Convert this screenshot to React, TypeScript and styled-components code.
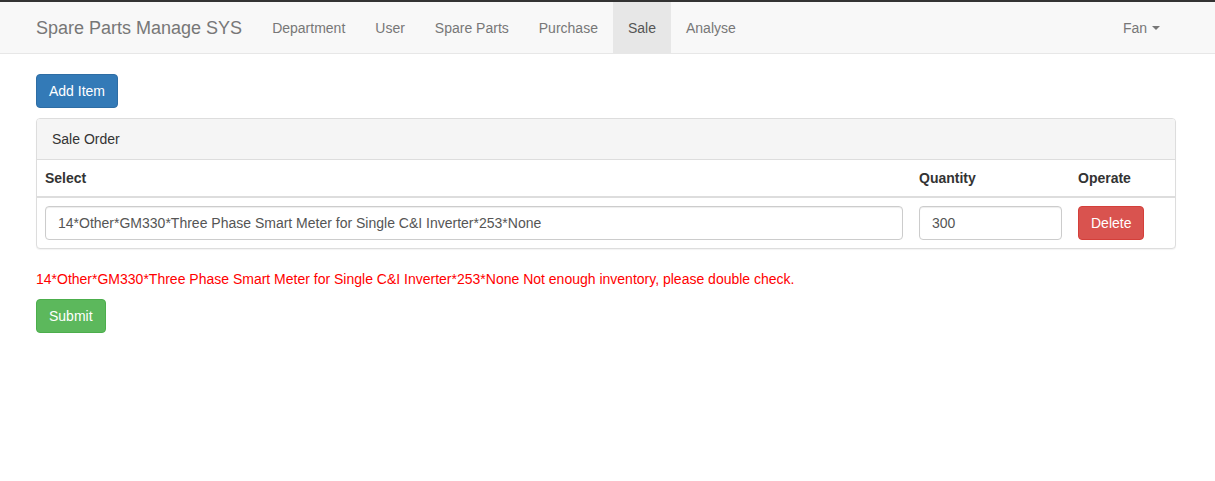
import React from "react";
import styled, { createGlobalStyle } from "styled-components";

const Global = createGlobalStyle`
  html, body { margin: 0; padding: 0; background: #fff; }
  body {
    font-family: "Liberation Sans", Arial, Helvetica, sans-serif;
    font-size: 14px;
    line-height: 1.42857143;
    color: #333;
  }
  * { box-sizing: border-box; }
`;

const TopLine = styled.div`
  height: 2px;
  background: #333;
`;

const Navbar = styled.nav`
  background: #f8f8f8;
  border-bottom: 1px solid #e7e7e7;
  margin-bottom: 20px;
`;

const Container = styled.div`
  width: 1170px;
  margin-left: 21px;
  padding: 0 15px;
`;

const NavInner = styled.div`
  display: flex;
  align-items: stretch;
  height: 51px;
`;

const Brand = styled.a`
  font-size: 18px;
  line-height: 20px;
  padding: 16px 15px 15px 0;
  color: #777;
  text-decoration: none;
`;

const NavList = styled.ul`
  display: flex;
  list-style: none;
  margin: 0;
  padding: 0;
`;

const RightList = styled(NavList)`
  margin-left: auto;
  margin-right: 1px;
`;

const NavLink = styled.a<{ $active?: boolean }>`
  display: flex;
  align-items: center;
  height: 51px;
  padding: 1px 15px 0;
  font-size: 14px;
  color: ${(p) => (p.$active ? "#555" : "#777")};
  background: ${(p) => (p.$active ? "#e7e7e7" : "transparent")};
  text-decoration: none;
`;

const Caret = styled.span`
  display: inline-block;
  width: 0;
  height: 0;
  margin-left: 5px;
  border-top: 4px solid #777;
  border-left: 4px solid transparent;
  border-right: 4px solid transparent;
`;

const Btn = styled.button<{ $variant: "primary" | "danger" | "success" }>`
  display: inline-block;
  height: 34px;
  padding: 6px 12px;
  font-family: inherit;
  font-size: 14px;
  line-height: 20px;
  color: #fff;
  border-radius: 4px;
  border: 1px solid
    ${(p) =>
      p.$variant === "primary" ? "#2e6da4" : p.$variant === "danger" ? "#d43f3a" : "#4cae4c"};
  background: ${(p) =>
    p.$variant === "primary" ? "#337ab7" : p.$variant === "danger" ? "#d9534f" : "#5cb85c"};
  cursor: pointer;
`;

const Panel = styled.div`
  margin-top: 10px;
  margin-bottom: 20px;
  border: 1px solid #ddd;
  border-radius: 4px;
  background: #fff;
  box-shadow: 0 1px 1px rgba(0, 0, 0, 0.05);
`;

const PanelHeading = styled.div`
  padding: 10px 15px;
  background: #f5f5f5;
  border-bottom: 1px solid #ddd;
  border-radius: 3px 3px 0 0;
  color: #333;
`;

const Table = styled.table`
  width: 100%;
  border-collapse: collapse;
  border-spacing: 0;
`;

const Th = styled.th<{ $w?: number }>`
  text-align: left;
  padding: 8px;
  line-height: 20px;
  font-weight: bold;
  border-bottom: 2px solid #ddd;
  width: ${(p) => (p.$w ? `${p.$w}px` : "auto")};
`;

const Td = styled.td`
  padding: 8px;
  vertical-align: top;
`;

const Input = styled.input`
  display: block;
  width: 100%;
  height: 34px;
  padding: 6px 12px;
  font-family: inherit;
  font-size: 14px;
  line-height: 20px;
  color: #555;
  background: #fff;
  border: 1px solid #ccc;
  border-radius: 4px;
  box-shadow: inset 0 1px 1px rgba(0, 0, 0, 0.075);
  outline: none;
`;

const ErrorText = styled.p`
  color: red;
  margin: 0 0 10px;
`;

const item = "14*Other*GM330*Three Phase Smart Meter for Single C&I Inverter*253*None";

export default function App() {
  return (
    <>
      <Global />
      <TopLine />
      <Navbar>
        <Container>
          <NavInner>
            <Brand href="#">Spare Parts Manage SYS</Brand>
            <NavList>
              {["Department", "User", "Spare Parts", "Purchase", "Sale", "Analyse"].map((t) => (
                <li key={t}>
                  <NavLink href="#" $active={t === "Sale"}>
                    {t}
                  </NavLink>
                </li>
              ))}
            </NavList>
            <RightList>
              <li>
                <NavLink href="#">
                  Fan
                  <Caret />
                </NavLink>
              </li>
            </RightList>
          </NavInner>
        </Container>
      </Navbar>
      <Container>
        <Btn $variant="primary">Add Item</Btn>
        <Panel>
          <PanelHeading>Sale Order</PanelHeading>
          <Table>
            <thead>
              <tr>
                <Th $w={874}>Select</Th>
                <Th $w={159}>Quantity</Th>
                <Th>Operate</Th>
              </tr>
            </thead>
            <tbody>
              <tr>
                <Td>
                  <Input defaultValue={item} />
                </Td>
                <Td>
                  <Input defaultValue="300" />
                </Td>
                <Td>
                  <Btn $variant="danger">Delete</Btn>
                </Td>
              </tr>
            </tbody>
          </Table>
        </Panel>
        <ErrorText>{item} Not enough inventory, please double check.</ErrorText>
        <Btn $variant="success">Submit</Btn>
      </Container>
    </>
  );
}
